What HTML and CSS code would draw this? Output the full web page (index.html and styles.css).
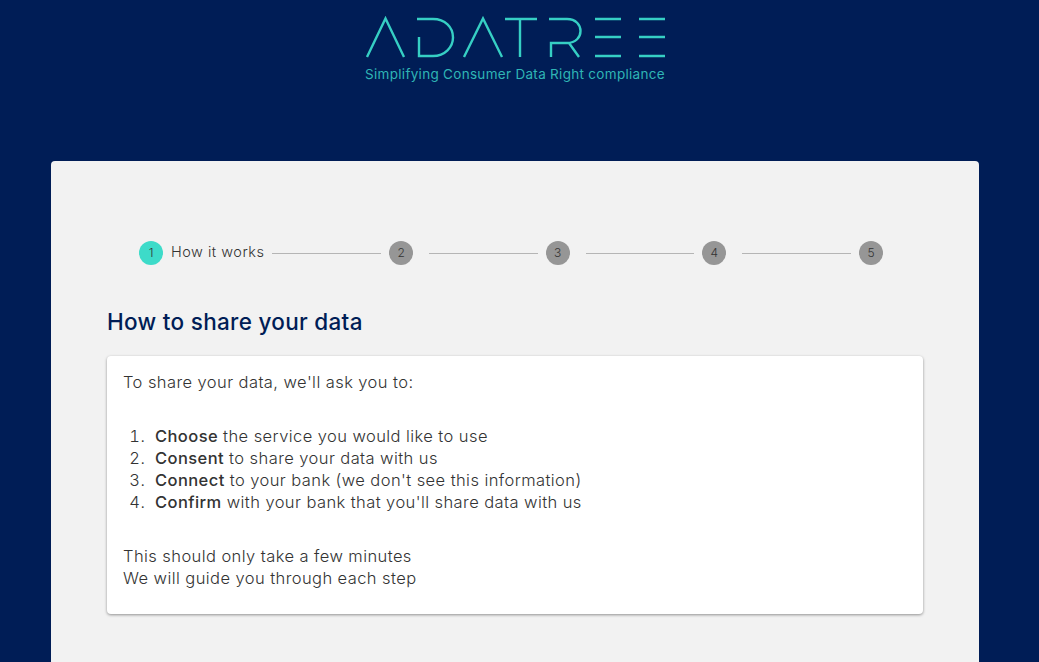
FILE: index.html
```html
<!DOCTYPE html>
<html lang="en">
<head>
    <meta charset="UTF-8">
    <meta name="viewport" content="width=device-width, initial-scale=1.0">
    <title>Adatree</title>
    <link rel="stylesheet" href="styles.css">
</head>
<body>
    <header class="brand">
        <svg class="logo" width="300" height="44" viewBox="0 0 300 44" role="img" aria-label="Adatree">
            <g fill="none" stroke="#36cfc4" stroke-width="2.4">
                <path d="M2 41 L20.500 2.500 L39 41"/>
                <path d="M54 21 V40 H68 C80 40 88 31 88 21.500 C88 11 80 3 68 3 H52"/>
                <path d="M99 41 L118 2.500 L137 41"/>
                <path d="M140 3 H172 M155 3 V41"/>
                <path d="M184 3 H202 C220 3 220 27 202 27 H186 V41 M204 27 L214 41"/>
                <path d="M230 3 H256 M230 21 H256 M230 40 H256"/>
                <path d="M274 3 H300 M274 21 H300 M274 40 H300"/>
            </g>
        </svg>
        <p class="tagline">Simplifying Consumer Data Right compliance</p>
    </header>

    <main class="card">
        <div class="stepper">
            <span class="step-num active">1</span>
            <span class="step-label">How it works</span>
            <span class="connector"></span>
            <span class="step-num">2</span>
            <span class="connector"></span>
            <span class="step-num">3</span>
            <span class="connector"></span>
            <span class="step-num">4</span>
            <span class="connector"></span>
            <span class="step-num">5</span>
        </div>

        <h1 class="title">How to share your data</h1>

        <section class="panel">
            <p>To share your data, we'll ask you to:</p>
            <ol class="steps">
                <li><strong>Choose</strong> the service you would like to use</li>
                <li><strong>Consent</strong> to share your data with us</li>
                <li><strong>Connect</strong> to your bank (we don't see this information)</li>
                <li><strong>Confirm</strong> with your bank that you'll share data with us</li>
            </ol>
            <p>This should only take a few minutes<br>We will guide you through each step</p>
        </section>
    </main>
</body>
</html>
```

FILE: styles.css
```css
html, body {
    height: 100%;
}
body {
    margin: 0;
    overflow: hidden;
    background-color: #001d56;
    font-family: Inter, "Open Sans", sans-serif;
    color: #484848;
}
.brand {
    height: 161px;
    padding: 16px 9px 0 0;
    box-sizing: border-box;
    text-align: center;
}
.logo {
    display: block;
    margin: 0 auto;
}
.tagline {
    margin: 5px 0 0;
    font-size: 13.500px;
    line-height: 18px;
    letter-spacing: 0.3px;
    color: #2fb5b5;
}
.card {
    width: 816px;
    margin-left: 51px;
    padding: 56px 56px 80px;
    background-color: #f2f2f2;
    border-radius: 4px;
}
.stepper {
    display: flex;
    align-items: center;
    padding: 24px 40px 24px 32px;
}
.step-num {
    flex: none;
    width: 24px;
    height: 24px;
    border-radius: 50%;
    background-color: #969696;
    color: #333;
    font-size: 12px;
    font-weight: 300;
    line-height: 23px;
    text-align: center;
}
.step-num.active {
    background-color: #3ddbc9;
}
.step-label {
    margin-left: 8px;
    font-size: 14.500px;
    font-weight: 300;
    line-height: 22px;
    letter-spacing: 0.5px;
    color: #333;
    transform: translateY(-1px);
}
.connector {
    flex: 1;
    height: 1px;
    margin: 0 8px;
    background-color: #b5b5b5;
}
.connector:nth-child(n+4) {
    margin-left: 16px;
}
.title {
    margin: 18px 0 19px;
    font-size: 22.500px;
    line-height: 30px;
    font-weight: 450;
    letter-spacing: 0.3px;
    color: #001d56;
}
.panel {
    padding: 15px 16px 25px;
    background-color: #fff;
    border-radius: 4px;
    box-shadow: 0 1px 3px rgba(0,0,0,0.4);
    font-size: 16.500px;
    font-weight: 300;
    line-height: 22px;
    letter-spacing: 0.42px;
    color: #333;
}
.panel p {
    margin: 0;
}
.steps {
    margin: 32px 0;
    padding-left: 32px;
}
.steps li::marker {
    content: counter(list-item) ".\00a0\00a0";
}
.steps strong {
    font-weight: 500;
    color: #333;
}
```
